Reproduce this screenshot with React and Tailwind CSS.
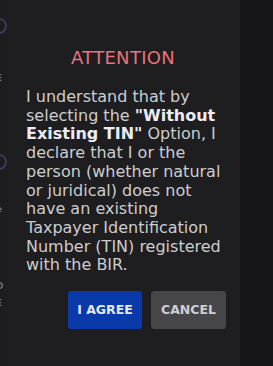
import React from "react";

function EdgeGlyphs() {
  return (
    <div className="w-[7px] shrink-0 overflow-hidden relative text-[#6a6a78]">
      <div className="absolute left-[-9px] top-[18px] w-[16px] h-[16px] rounded-full border-2 border-[#3a3a5a]" />
      <div className="absolute left-[-4px] top-[72px] text-[9px] font-bold">E</div>
      <div className="absolute left-[-9px] top-[154px] w-[16px] h-[16px] rounded-full border-2 border-[#3a3a5a]" />
      <div className="absolute left-[-4px] top-[203px] text-[9px] font-bold">e</div>
      <div className="absolute left-[-4px] top-[280px] text-[9px] font-bold">D</div>
      <div className="absolute left-[-4px] top-[297px] text-[9px] font-bold">E</div>
    </div>
  );
}

export default function App() {
  return (
    <div
      className="w-[273px] h-[366px] flex bg-[#1d1d1f] overflow-hidden"
      style={{ fontFamily: '"DejaVu Sans", sans-serif' }}
    >
      <EdgeGlyphs />
      <div className="w-[233px] shrink-0 bg-[#1e1e20] flex flex-col pt-[46px] pl-[19px] pr-[16px]">
        <h2 className="text-center text-[18px] leading-[24px] text-[#e7737d] tracking-[0.3px] -ml-[4px]">ATTENTION</h2>
        <p className="mt-[18px] text-[16px] leading-[18.7px] text-[#cdcdcf]">
          I understand that by selecting the{" "}
          <span className="font-bold text-[#ececf4]">"Without Existing TIN"</span> Option, I declare that I or the
          person (whether natural or juridical) does not have an existing Taxpayer Identification Number (TIN)
          registered with the BIR.
        </p>
        <div className="flex justify-end gap-[9px] mt-[16px] -mr-[2px]">
          <button className="w-[74px] h-[38px] rounded-[3px] bg-[#0a3aa9] text-[#e4e8f4] text-[12.5px] font-bold">
            I AGREE
          </button>
          <button className="w-[75px] h-[38px] rounded-[3px] bg-[#464649] text-[#cfcfd2] text-[12.5px] font-bold">
            CANCEL
          </button>
        </div>
      </div>
      <div className="flex-1 bg-[#161618]" />
    </div>
  );
}
